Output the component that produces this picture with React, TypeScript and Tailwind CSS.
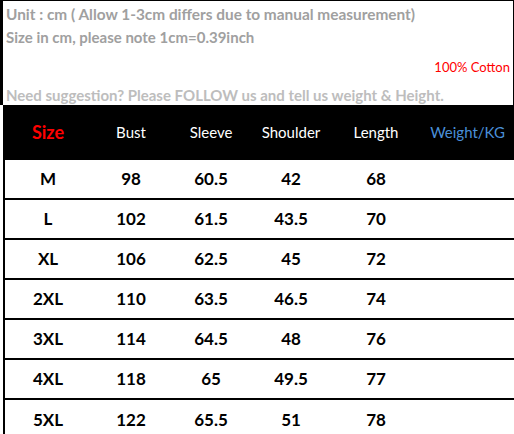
const rows = [
  ['M', '98', '60.5', '42', '68'],
  ['L', '102', '61.5', '43.5', '70'],
  ['XL', '106', '62.5', '45', '72'],
  ['2XL', '110', '63.5', '46.5', '74'],
  ['3XL', '114', '64.5', '48', '76'],
  ['4XL', '118', '65', '49.5', '77'],
  ['5XL', '122', '65.5', '51', '78'],
];

const cols = 'grid grid-cols-[86px_80px_80px_80px_90px_1fr]';

export default function App() {
  return (
    <div className="w-[514px] h-[434px] overflow-hidden bg-white font-['Lato',sans-serif]">
      {/* notes */}
      <div className="h-[105px] border-l-[3px] border-t border-r border-black pl-[3px] pr-[3px] flex flex-col">
        <div className="h-[25px] pt-[2px] text-[15.4px] font-bold text-[#a0a0a0] leading-[22px]">
          Unit : cm ( Allow 1-3cm differs due to manual measurement)
        </div>
        <div className="h-[22px] text-[15px] font-bold text-[#a0a0a0] leading-[22px]">
          Size in cm, please note 1cm=0.39inch
        </div>
        <div className="h-[36px] flex items-end justify-end pb-[9px] text-[13px] text-[#ff0000] leading-[16px]">
          100% Cotton
        </div>
        <div className="pt-[2px] text-[15px] font-bold text-[#bdbdbd] leading-[18px]">
          Need suggestion? Please FOLLOW us and tell us weight &amp; Height.
        </div>
      </div>

      {/* table */}
      <div className="ml-[3px] border-l-2 border-black">
        <div className={`${cols} h-[55px] bg-black items-center text-center text-[15px] text-white`}>
          <div className="text-[18px] font-bold text-[#ff0000]">Size</div>
          <div>Bust</div>
          <div>Sleeve</div>
          <div>Shoulder</div>
          <div>Length</div>
          <div className="text-[#4a8fd8]">Weight/KG</div>
        </div>
        {rows.map((r, i) => (
          <div
            key={r[0]}
            className={`${cols} h-[40px] items-center text-center text-[17px] font-bold text-black ${
              i < rows.length - 1 ? 'border-b-2 border-black' : ''
            }`}
          >
            {r.map((c, j) => (
              <div key={j}>{c}</div>
            ))}
            <div />
          </div>
        ))}
      </div>
    </div>
  );
}
